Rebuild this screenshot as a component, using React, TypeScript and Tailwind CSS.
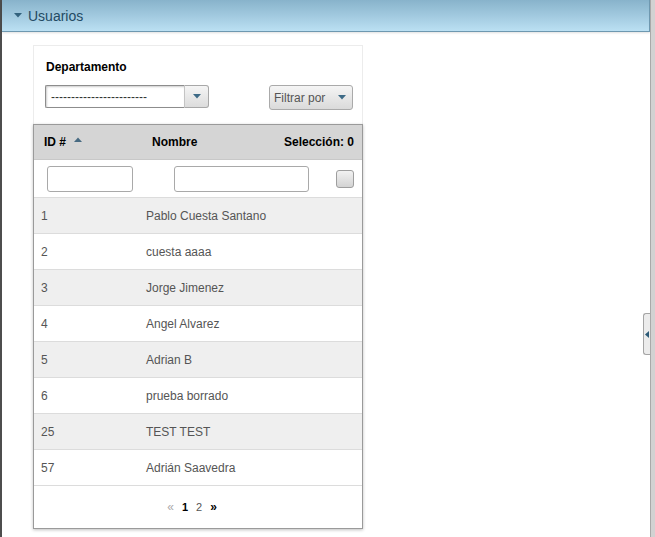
const rows = [
  { id: "1", name: "Pablo Cuesta Santano" },
  { id: "2", name: "cuesta aaaa" },
  { id: "3", name: "Jorge Jimenez" },
  { id: "4", name: "Angel Alvarez" },
  { id: "5", name: "Adrian B" },
  { id: "6", name: "prueba borrado" },
  { id: "25", name: "TEST TEST" },
  { id: "57", name: "Adrián Saavedra" },
];

function Caret({ className }: { className: string }) {
  return (
    <svg width="8" height="5" viewBox="0 0 8 5" className={className}>
      <path d="M0 0 L8 0 L4 4.5 Z" fill="currentColor" />
    </svg>
  );
}

export default function App() {
  return (
    <div
      className="relative flex w-[655px] h-[537px] overflow-hidden bg-white text-[12px]"
      style={{ fontFamily: '"Liberation Sans", Arial, sans-serif' }}
    >
      {/* left frame edge */}
      <div className="w-[2px] h-full bg-[#4d4d4d]" />

      <div className="flex flex-col w-[648px] h-full">
        {/* Panel header */}
        <div className="h-[32px] flex items-center gap-[6px] pl-[12px] bg-gradient-to-b from-[#88b3cb] to-[#bbe0f3] border-b border-[#6e98b0] border-r shadow-[0_1px_2px_rgba(0,0,0,0.12)]">
          <Caret className="text-[#33627d]" />
          <span className="text-[14px] text-[#234a63] leading-none">Usuarios</span>
        </div>

        {/* Content */}
        <div className="pl-[31px] pt-[13px]">
          <div className="w-[330px]">
            {/* Filter area */}
            <div className="h-[79px] border-t border-x border-[#ececec] pt-[14px]">
              <div className="pl-[12px] font-bold text-black leading-[14px]">Departamento</div>
              <div className="flex items-start mt-[11px] pl-[11px]">
                <div className="flex h-[23px]">
                  <div className="w-[140px] h-full border border-[#8d8d8d] border-r-[#c4c4c4] rounded-l-[2px] shadow-[inset_1px_1px_2px_rgba(0,0,0,0.2)] bg-white pl-[5px] flex items-center text-[#333] leading-none">
                    ------------------------
                  </div>
                  <div className="w-[24px] h-full border border-l-0 border-[#a8a8a8] rounded-r-[3px] bg-gradient-to-b from-[#f5f5f5] to-[#dcdcdc] flex items-center justify-center">
                    <Caret className="text-[#3d6a86]" />
                  </div>
                </div>
                <div className="ml-[60px] w-[84px] h-[25px] border border-[#aaa] rounded-[3px] bg-gradient-to-b from-[#f5f5f5] to-[#dadada] flex items-center pl-[4px] gap-[13px] text-[#555]">
                  <span className="leading-none">Filtrar por</span>
                  <Caret className="text-[#3d6a86]" />
                </div>
              </div>
            </div>

            {/* Table */}
            <div className="border border-[#9a9a9a] shadow-[0_1px_3px_rgba(0,0,0,0.25)] bg-white">
              <div className="h-[35px] flex items-center bg-[#d5d5d5] font-bold text-black border-b border-[#c8c8c8]">
                <div className="w-[106px] pl-[10px] flex items-center gap-[8px]">
                  <span>ID #</span>
                  <svg width="8" height="5" viewBox="0 0 8 5" className="text-[#476a82] -mt-[6px]">
                    <path d="M0 5 L8 5 L4 0.5 Z" fill="currentColor" />
                  </svg>
                </div>
                <div className="flex-1 pl-[12px]">Nombre</div>
                <div className="pr-[8px]">Selección: 0</div>
              </div>

              <div className="h-[38px] flex items-center border-b border-[#dcdcdc]">
                <div className="w-[106px] pl-[13px]">
                  <div className="w-[86px] h-[26px] border border-[#a9a9a9] rounded-[3px] bg-white" />
                </div>
                <div className="flex-1 pl-[34px]">
                  <div className="w-[135px] h-[26px] border border-[#a9a9a9] rounded-[3px] bg-white" />
                </div>
                <div className="pr-[8px]">
                  <div className="w-[18px] h-[18px] border border-[#9e9e9e] rounded-[3px] bg-gradient-to-b from-[#f2f2f2] to-[#d3d3d3]" />
                </div>
              </div>

              {rows.map((r, i) => (
                <div
                  key={r.id}
                  className={`h-[36px] flex items-center border-b border-[#dcdcdc] text-[#555] ${i % 2 === 0 ? "bg-[#efefef]" : "bg-white"}`}
                >
                  <div className="w-[106px] pl-[7px]">{r.id}</div>
                  <div className="flex-1 pl-[6px]">{r.name}</div>
                </div>
              ))}

              <div className="h-[42px] flex items-center justify-center gap-[8px] text-[12px] pr-[12px]">
                <span className="text-[#aaa]">«</span>
                <span className="font-bold text-black text-[11px]">1</span>
                <span className="text-[#555] text-[11px]">2</span>
                <span className="font-bold text-black">»</span>
              </div>
            </div>
          </div>
        </div>
      </div>

      {/* right scroll strip */}
      <div className="w-[5px] h-full bg-[#d2d2d2] border-l border-[#a9a9a9]" />

      {/* collapse tab */}
      <div className="absolute left-[643px] top-[313px] w-[7px] h-[42px] rounded-l-[3px] border border-r-0 border-[#a5a5a5] bg-[#ececec] flex items-center justify-center">
        <svg width="4" height="7" viewBox="0 0 4 7" className="text-[#2d5b77]">
          <path d="M4 0 L4 7 L0 3.5 Z" fill="currentColor" />
        </svg>
      </div>
    </div>
  );
}
